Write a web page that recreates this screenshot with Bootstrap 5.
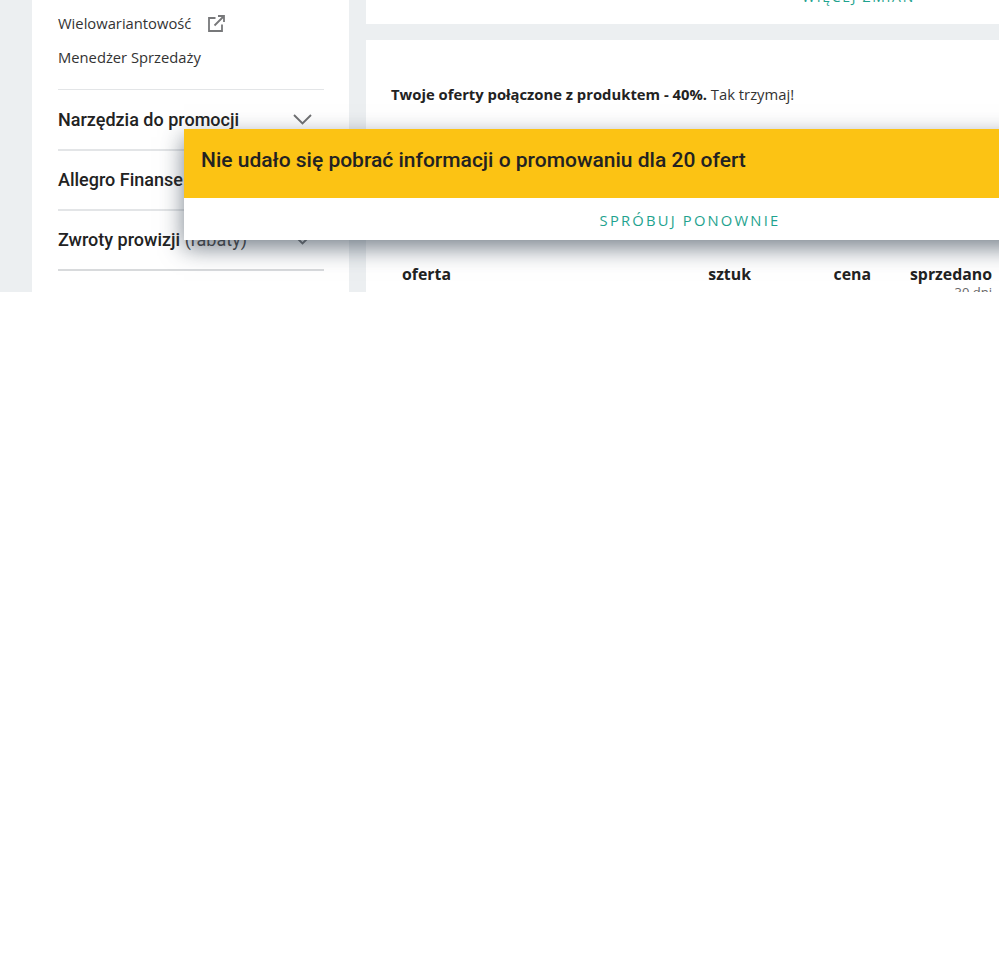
<!DOCTYPE html>
<html lang="pl">
<head>
<meta charset="utf-8">
<title>Oferty</title>
<link href="https://cdn.jsdelivr.net/npm/bootstrap@5.3.0/dist/css/bootstrap.min.css" rel="stylesheet">
<style>
html,body{background:#fff;overflow:hidden}
body{font-family:"Open Sans","Liberation Sans",sans-serif;color:#222}
.shell{height:292px;overflow:hidden;background:#eceff1;padding-left:32px;gap:17px}
.side{width:317px;background:#fff;padding:0 25px 0 26px;flex:none}
.side-link{font-size:14.75px;line-height:20px;color:#333;white-space:nowrap}
.side-first{margin-top:13px;margin-bottom:14px;gap:17px}
.side-last{padding-bottom:22px}
.side-sec{height:60px;border-top:2px solid #e3e5e7;font-family:Roboto,"Liberation Sans",sans-serif;font-weight:500;font-size:18px;color:#222;padding-right:12px;padding-bottom:1px}
.side-sec-first{border-top-width:1px}
.side-end{border-top:2px solid #d8dadc}
.side-sec small{font-size:18px;font-weight:400;color:#444}
.main-col{flex:1;min-width:0;gap:16px}
.top-card{height:24px;background:#fff;flex:none;overflow:hidden}
.more-link{position:relative;top:-13px;margin-left:436px;font-size:14px;letter-spacing:1.7px;line-height:20px;color:#1fa38f;white-space:nowrap}
.offer-card{background:#fff;flex:1;padding:44px 7px 0 25px;overflow:hidden}
.intro{font-size:14.8px;line-height:20px;color:#333;margin:0}
.intro b{color:#222}
.thead-row{margin-top:159px;font-size:15.85px;font-weight:700;line-height:22px;color:#222;padding-left:11px}
.th-a{width:270px}.th-b{width:79px;text-align:right;margin-left:0}.th-c{width:120px;text-align:right}.th-d{width:121px;text-align:right}
.th-d span{display:block;font-size:13px;font-weight:400;line-height:14px;color:#666}
.toast-box{position:absolute;left:184px;top:129px;width:1012px;background:#fff;box-shadow:0 8px 22px rgba(50,65,80,.65)}
.toast-head{height:69px;background:#fcc314;font-family:Roboto,"Liberation Sans",sans-serif;font-weight:500;font-size:21px;color:#222;padding:0 0 6px 17px}
.toast-btn{height:42px;font-size:14.75px;letter-spacing:2.2px;color:#1fa38f;padding-top:2px}
</style>
</head>
<body>
<div class="position-relative">
  <div class="shell d-flex">
    <aside class="side">
      <div class="side-first d-flex align-items-center side-link">
        <span>Wielowariantowość</span>
        <svg width="17" height="17" viewBox="0 0 17 17" fill="none" stroke="#77787a" stroke-width="1.8"><path d="M7.500 3H1v13h13V9.500"/><path d="M6.500 10.500 16 1M10 1h6v6"/></svg>
      </div>
      <div class="side-link side-last">Menedżer Sprzedaży</div>
      <div class="side-sec side-sec-first d-flex align-items-center justify-content-between">
        <span>Narzędzia do promocji</span>
        <svg width="19" height="11" viewBox="0 0 19 11" fill="none" stroke="#6f7072" stroke-width="1.9"><path d="M1 1l8.500 8.500L18 1"/></svg>
      </div>
      <div class="side-sec d-flex align-items-center justify-content-between">
        <span>Allegro Finanse</span>
        <svg width="19" height="11" viewBox="0 0 19 11" fill="none" stroke="#6f7072" stroke-width="1.9"><path d="M1 1l8.500 8.500L18 1"/></svg>
      </div>
      <div class="side-sec d-flex align-items-center justify-content-between">
        <span>Zwroty prowizji <small>(rabaty)</small></span>
        <svg width="19" height="11" viewBox="0 0 19 11" fill="none" stroke="#6f7072" stroke-width="1.9"><path d="M1 1l8.500 8.500L18 1"/></svg>
      </div>
      <div class="side-end"></div>
    </aside>
    <main class="main-col d-flex flex-column">
      <div class="top-card"><div class="more-link">WIĘCEJ ZMIAN</div></div>
      <section class="offer-card">
        <p class="intro"><b>Twoje oferty połączone z produktem - 40%.</b> Tak trzymaj!</p>
        <div class="thead-row d-flex">
          <div class="th-a">oferta</div>
          <div class="th-b">sztuk</div>
          <div class="th-c">cena</div>
          <div class="th-d">sprzedano<span>30 dni</span></div>
        </div>
      </section>
    </main>
    <div class="toast-box">
      <div class="toast-head d-flex align-items-center">Nie udało się pobrać informacji o promowaniu dla 20 ofert</div>
      <div class="toast-btn d-flex align-items-center justify-content-center">SPRÓBUJ PONOWNIE</div>
    </div>
  </div>
</div>
<script src="https://cdn.jsdelivr.net/npm/bootstrap@5.3.0/dist/js/bootstrap.bundle.min.js"></script>
</body>
</html>
